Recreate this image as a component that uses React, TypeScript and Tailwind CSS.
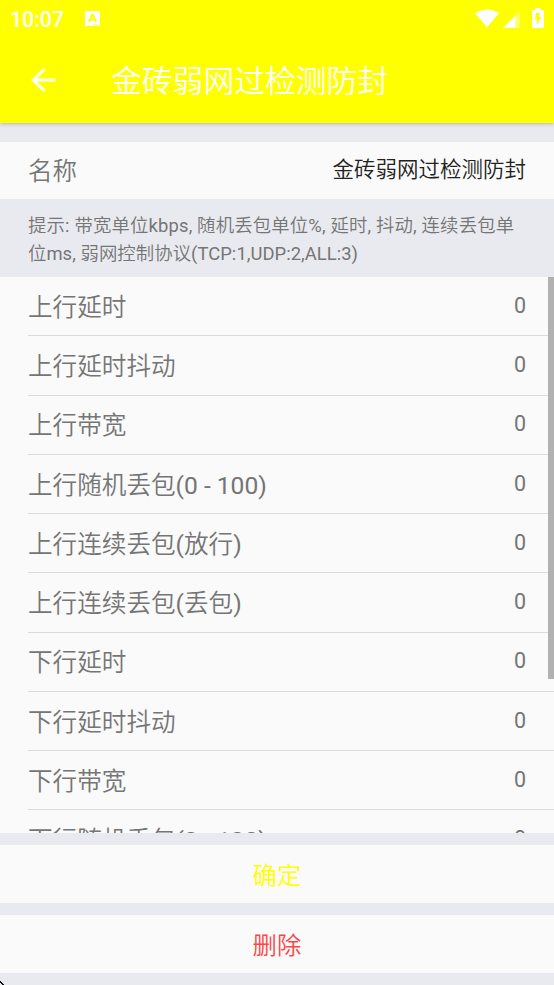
interface SettingRow {
  label: string;
  value: number;
}

const rows: SettingRow[] = [
  { label: "上行延时", value: 0 },
  { label: "上行延时抖动", value: 0 },
  { label: "上行带宽", value: 0 },
  { label: "上行随机丢包(0 - 100)", value: 0 },
  { label: "上行连续丢包(放行)", value: 0 },
  { label: "上行连续丢包(丢包)", value: 0 },
  { label: "下行延时", value: 0 },
  { label: "下行延时抖动", value: 0 },
  { label: "下行带宽", value: 0 },
  { label: "下行随机丢包(0 - 100)", value: 0 },
];

function StatusBar() {
  return (
    <div className="flex h-[38px] items-center pl-[10px] pr-[10px]">
      <span className="pt-[2px] text-[21.3px] leading-none font-medium">10:07</span>
      <svg className="mb-[1px] ml-[21px] h-[15px] w-[15px]" viewBox="0 0 15 15">
        <rect width="15" height="15" rx="1.5" fill="#fff" />
        <path d="M4 11 7 3.6h1L11 11M5.3 8.5h4.4" fill="none" stroke="#ff0" strokeWidth="1.9" />
        <path d="M8 13.3h1.2M10.3 13.3h1.2M12.6 13.3h1.2" stroke="#ff0" strokeWidth="1.2" />
      </svg>
      <svg className="mb-[1px] ml-auto h-[19px] w-[24px]" viewBox="0 0 24 19">
        <path d="M0 4Q12-3.2 24 4L12 18.5Z" fill="#fff" />
      </svg>
      <svg className="ml-[4px] h-[17px] w-[17px]" viewBox="0 0 17 17">
        <path d="M17 0V17H0Z" fill="#fff" fillOpacity="0.4" />
        <path d="M12.5 4.5V17H0Z" fill="#fff" />
      </svg>
      <svg className="mb-[2px] ml-[12px] h-[20px] w-[12px]" viewBox="0 0 12 20">
        <path d="M3.5 0h5v2H11q1 0 1 1v16q0 1-1 1H1q-1 0-1-1V3q0-1 1-1h2.5Z" fill="#fff" />
        <path d="M4 5h4L7 9h2.4L4.8 16.8V11.5H3Z" fill="#ff0" />
      </svg>
    </div>
  );
}

function ActionButton({ text, className }: { text: string; className: string }) {
  return (
    <button className={`h-[58px] w-full shrink-0 bg-[#fafafa] pt-[4px] text-[24.4px] leading-none ${className}`}>
      {text}
    </button>
  );
}

export default function App() {
  return (
    <div className="relative flex h-[985px] w-full flex-col overflow-hidden bg-[#e9eaef] font-[Roboto,'Noto_Sans_CJK_SC_DemiLight','Noto_Sans_CJK_SC_Light','Noto_Sans_CJK_SC',sans-serif] text-[#757575]">
      <header className="z-10 h-[123px] shrink-0 bg-[#ffff00] text-white shadow-[0_1px_4px_rgba(0,0,0,0.22)]">
        <StatusBar />
        <div className="flex h-[84px] items-center pl-[31px]">
          <svg className="h-[24px] w-[25px]" viewBox="0 0 25 24" fill="none" stroke="#fff" strokeWidth="3">
            <path d="M24.5 12H2.5M13.5 1.2 2.2 12l11.3 10.8" />
          </svg>
          <h1 className="ml-[55px] pt-[5px] text-[30.8px] leading-none">金砖弱网过检测防封</h1>
        </div>
      </header>

      <div className="mt-[19px] flex h-[57px] shrink-0 items-center justify-between bg-[#fafafa] px-[28px]">
        <span className="pt-[4px] text-[24.5px] leading-none">名称</span>
        <span className="pb-[2px] text-[21.5px] leading-none text-[#212121]">金砖弱网过检测防封</span>
      </div>

      <p className="h-[78px] shrink-0 pt-[13px] pl-[28px] text-[18.4px] leading-[27.5px] whitespace-nowrap">
        <span className="tracking-[0.15px]">提示: 带宽单位kbps, 随机丢包单位%, 延时, 抖动, 连续丢包单</span>
        <br />
        <span className="tracking-[0.05px]">位ms, 弱网控制协议(TCP:1,UDP:2,ALL:3)</span>
      </p>

      <main className="relative h-[556px] shrink-0 overflow-hidden bg-[#fafafa]">
        {rows.map((row) => (
          <div
            key={row.label}
            className="ml-[28px] flex h-[59.25px] items-center justify-between border-b-[1.5px] border-[#dadada] pr-[28px]"
          >
            <span className="pt-[4px] text-[24.6px] leading-none">{row.label}</span>
            <span className="pb-[1px] text-[21.5px] leading-none">{row.value}</span>
          </div>
        ))}
        {/* scrollbar thumb */}
        <div className="absolute top-0 right-0 h-[402px] w-[6px] bg-[#b1b1b1]" />
      </main>

      <div className="mt-[12px] flex flex-col gap-[12px]">
        <ActionButton text="确定" className="text-[#ffff00]" />
        <ActionButton text="删除" className="text-[#ff4444]" />
      </div>

      <svg className="absolute bottom-0 left-0 h-[4px] w-[4px]" viewBox="0 0 4 4" shapeRendering="crispEdges">
        <path d="M0 0h1v1h1v1h1v1h1v1H2V3H1V2H0Z" fill="#111" />
      </svg>
    </div>
  );
}
